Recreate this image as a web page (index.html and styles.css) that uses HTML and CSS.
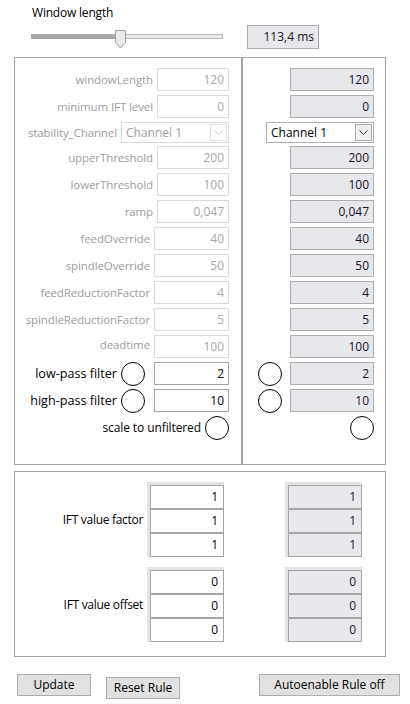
FILE: index.html
```html
<!DOCTYPE html>
<html>
<head>
<meta charset="utf-8">
<link rel="stylesheet" href="styles.css">
</head>
<body>
<div class="app">
  <div class="hdr-label">Window length</div>
  <div class="hdr-row">
    <div class="slider">
      <div class="track-fill"></div>
      <div class="track-rest"></div>
      <svg class="thumb" width="11" height="19" viewBox="0 0 11 19"><path d="M0.5 0.5 H10.5 V12.5 L5.5 18 L0.5 12.5 Z" fill="#e9e9e9" stroke="#a0a0a0"/></svg>
    </div>
    <div class="valbox">113,4 ms</div>
  </div>

  <div class="panel">
    <div class="col-left">
      <div class="row"><span class="lbl dis">windowLength</span><div class="box dis w72">120</div></div>
      <div class="row"><span class="lbl dis">minimum IFT level</span><div class="box dis w72">0</div></div>
      <div class="row combo-row"><span class="lbl dis">stability_Channel</span><div class="combo dis w108"><span>Channel 1</span><span class="arrow"><svg width="9" height="5" viewBox="0 0 9 5"><path d="M0.5 0.5 L4.5 4.5 L8.5 0.5" fill="none" stroke="#c8c8c8"/></svg></span></div></div>
      <div class="row"><span class="lbl dis">upperThreshold</span><div class="box dis w72">200</div></div>
      <div class="row"><span class="lbl dis">lowerThreshold</span><div class="box dis w72">100</div></div>
      <div class="row"><span class="lbl dis">ramp</span><div class="box dis w72">0,047</div></div>
      <div class="row"><span class="lbl dis">feedOverride</span><div class="box dis w75">40</div></div>
      <div class="row"><span class="lbl dis">spindleOverride</span><div class="box dis w75">50</div></div>
      <div class="row"><span class="lbl dis">feedReductionFactor</span><div class="box dis w75">4</div></div>
      <div class="row"><span class="lbl dis">spindleReductionFactor</span><div class="box dis w75">5</div></div>
      <div class="row"><span class="lbl dis lbl-low">deadtime</span><div class="box dis w75">100</div></div>
      <div class="row"><span class="lbl big">low-pass filter</span><span class="circle"></span><div class="box en w75 ml9">2</div></div>
      <div class="row"><span class="lbl big">high-pass filter</span><span class="circle"></span><div class="box en w75 ml9">10</div></div>
      <div class="row"><span class="lbl">scale to unfiltered</span><span class="circle"></span></div>
    </div>
    <div class="col-right">
      <div class="row"><div class="box ro w84">120</div></div>
      <div class="row"><div class="box ro w84">0</div></div>
      <div class="row combo-row"><div class="combo ro-combo w108"><span>Channel 1</span><span class="arrow dark"><svg width="9" height="5" viewBox="0 0 9 5"><path d="M0.5 0.5 L4.5 4.5 L8.5 0.5" fill="none" stroke="#404040"/></svg></span></div></div>
      <div class="row"><div class="box ro w84">200</div></div>
      <div class="row"><div class="box ro w84">100</div></div>
      <div class="row"><div class="box ro w84">0,047</div></div>
      <div class="row"><div class="box ro w84">40</div></div>
      <div class="row"><div class="box ro w84">50</div></div>
      <div class="row"><div class="box ro w84">4</div></div>
      <div class="row"><div class="box ro w84">5</div></div>
      <div class="row"><div class="box ro w84">100</div></div>
      <div class="row"><span class="circle"></span><div class="box ro w84 ml8">2</div></div>
      <div class="row"><span class="circle"></span><div class="box ro w84 ml8">10</div></div>
      <div class="row"><span class="circle"></span></div>
    </div>
  </div>

  <div class="panel2">
    <div class="group">
      <div class="glabel">IFT value factor</div>
      <div class="well"><div class="cell">1</div><div class="cell">1</div><div class="cell">1</div></div>
      <div class="well well-r"><div class="cell ro">1</div><div class="cell ro">1</div><div class="cell ro">1</div></div>
    </div>
    <div class="group g2">
      <div class="glabel">IFT value offset</div>
      <div class="well"><div class="cell">0</div><div class="cell">0</div><div class="cell">0</div></div>
      <div class="well well-r"><div class="cell ro">0</div><div class="cell ro">0</div><div class="cell ro">0</div></div>
    </div>
  </div>

  <div class="buttons">
    <div class="btn b-update">Update</div>
    <div class="btn b-reset">Reset Rule</div>
    <div class="btn b-auto">Autoenable Rule off</div>
  </div>
</div>
</body>
</html>
```

FILE: styles.css
```css
* { box-sizing: border-box; }
html, body { margin: 0; padding: 0; background: #ffffff; }
body {
  font-family: "Open Sans", "Noto Sans", sans-serif;
  font-size: 12px;
  color: #000;
  width: 410px;
  height: 704px;
  overflow: hidden;
}
.app { padding-top: 4px; }

.hdr-label {
  margin-left: 32px;
  height: 18px;
  line-height: 18px;
  letter-spacing: -0.2px;
}
.hdr-row {
  display: flex;
  align-items: flex-start;
  margin-top: 3px;
  height: 32px;
}
.slider {
  position: relative;
  margin-left: 31px;
  width: 192px;
  height: 24px;
  display: flex;
  align-items: flex-start;
  padding-top: 9px;
}
.track-fill {
  width: 87px;
  height: 5px;
  background: #a9a9a9;
}
.track-rest {
  flex: 1;
  height: 5px;
  background: #e7eaea;
  border: 1px solid #b9b9b9;
  border-left: none;
}
.thumb {
  position: absolute;
  left: 84px;
  top: 5px;
}
.valbox {
  margin-left: 24px;
  width: 72px;
  height: 24px;
  border: 1px solid #adadad;
  background: #e6e8ec;
  text-align: right;
  padding-right: 4px;
  line-height: 21px;
  color: #1b1029;
}

.panel {
  margin-left: 14px;
  margin-top: 0;
  width: 372px;
  height: 408px;
  border: 1px solid #a5a5a5;
  display: grid;
  grid-template-columns: 226px 2px 1fr;
}
.col-left {
  grid-column: 1;
  grid-row: 1;
  padding: 10px 12px 0 0;
  display: flex;
  flex-direction: column;
  align-items: flex-end;
}
.panel::before {
  content: "";
  grid-column: 2;
  grid-row: 1;
  background: #a5a5a5;
}
.col-right {
  grid-column: 3;
  grid-row: 1;
  padding: 10px 11px 0 0;
  display: flex;
  flex-direction: column;
  align-items: flex-end;
}
.row {
  display: flex;
  align-items: center;
  justify-content: flex-end;
  height: 23px;
  margin-bottom: 4px;
}
.combo-row {
  height: 21px;
  margin-bottom: 3px;
}
.lbl {
  white-space: nowrap;
  margin-right: 4px;
  letter-spacing: -0.1px;
}
.lbl.dis { color: #a09c9e; font-size: 11.5px; }
.lbl.big { font-size: 12.6px; letter-spacing: 0; }
.lbl-low { position: relative; top: -2px; }

.box {
  height: 23px;
  line-height: 21px;
  text-align: right;
  padding-right: 4px;
  white-space: nowrap;
}
.box.dis {
  border: 1px solid #dadada;
  color: #a7a7a7;
  background: #fff;
}
.box.en {
  border: 1px solid #a5a5a5;
  background: #fff;
  color: #000;
}
.box.ro {
  border: 1px solid #adadad;
  background: #e6e8ec;
  color: #1b1029;
}
.w72 { width: 72px; }
.w75 { width: 75px; }
.w84 { width: 84px; }
.w108 { width: 108px; }
.ml9 { margin-left: 9px; }
.ml8 { margin-left: 8px; }

.combo {
  height: 21px;
  display: flex;
  align-items: center;
  justify-content: space-between;
  padding-left: 4px;
  padding-right: 1px;
}
.combo.dis {
  border: 1px solid #dadada;
  color: #a09c9e;
  background: #fff;
}
.ro-combo {
  border: 1px solid #adadad;
  background: #fff;
  color: #000;
}
.arrow {
  width: 17px;
  height: 17px;
  border: 1px solid #e0e0e0;
  display: flex;
  align-items: center;
  justify-content: center;
  background: #fff;
}
.arrow.dark { border-color: #adadad; background: #f0f0f0; }

.circle {
  width: 24px;
  height: 24px;
  border: 1px solid #000;
  border-radius: 50%;
  background: #fff;
  flex: none;
}

.panel2 {
  margin-left: 14px;
  margin-top: 6px;
  width: 372px;
  height: 186px;
  border: 1px solid #a5a5a5;
  padding-top: 10px;
}
.group {
  display: flex;
  align-items: center;
}
.g2 { margin-top: 10px; }
.glabel {
  width: 128px;
  text-align: right;
  letter-spacing: -0.3px;
  margin-right: 4px;
}
.well {
  border-top: 3px solid #e4e4e4;
  border-left: 3px solid #e4e4e4;
  box-shadow: inset 1px 1px 0 #cfcfcf;
  width: 77px;
}
.well-r { margin-left: 61px; }
.cell {
  height: 24px;
  border: 1px solid #a5a5a5;
  background: #fff;
  text-align: right;
  padding-right: 5px;
  line-height: 22px;
}
.cell.ro { background: #e6e8ec; color: #1b1029; }

.buttons {
  display: flex;
  align-items: flex-start;
  margin-top: 17px;
  padding-left: 17px;
}
.btn {
  height: 22px;
  line-height: 20px;
  border: 1px solid #adadad;
  background: #e1e1e1;
  text-align: center;
  white-space: nowrap;
}
.b-update { width: 74px; }
.b-reset { width: 74px; margin-left: 15px; margin-top: 3px; }
.b-auto { width: 141px; margin-left: 79px; }
```
